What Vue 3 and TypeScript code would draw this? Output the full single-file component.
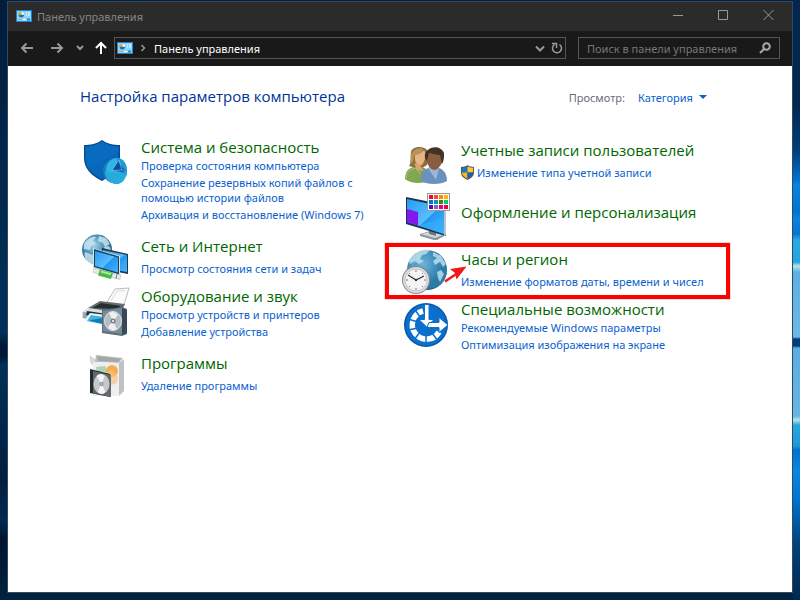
<script setup lang="ts">
import { ref } from 'vue'

interface Category {
  id: string
  title: string
  links: string[]
  shield?: boolean
  marked?: boolean
}

const columns: Category[][] = [
  [
    {
      id: 'security',
      title: 'Система и безопасность',
      links: [
        'Проверка состояния компьютера',
        'Сохранение резервных копий файлов с помощью истории файлов',
        'Архивация и восстановление (Windows 7)',
      ],
    },
    { id: 'network', title: 'Сеть и Интернет', links: ['Просмотр состояния сети и задач'] },
    { id: 'hardware', title: 'Оборудование и звук', links: ['Просмотр устройств и принтеров', 'Добавление устройства'] },
    { id: 'programs', title: 'Программы', links: ['Удаление программы'] },
  ],
  [
    { id: 'users', title: 'Учетные записи пользователей', links: ['Изменение типа учетной записи'], shield: true },
    { id: 'display', title: 'Оформление и персонализация', links: [] },
    { id: 'clock', title: 'Часы и регион', links: ['Изменение форматов даты, времени и чисел'], marked: true },
    {
      id: 'access',
      title: 'Специальные возможности',
      links: ['Рекомендуемые Windows параметры', 'Оптимизация изображения на экране'],
    },
  ],
]

const swatches: string[] = [
  '#e81123', '#ff4343', '#ff8c00', '#ffb900',
  '#0078d7', '#0099bc', '#498205', '#00cc6a',
  '#4f10b5', '#8764b8', '#e3008c', '#e8004c',
]

const search = ref('')
const view = ref('category')

function density(c: Category): string {
  if (c.links.length === 0) return 'bare'
  return c.links.length === 1 ? 'single' : 'multi'
}
</script>

<template>
  <div class="desktop">
    <main class="window">
      <header class="titlebar">
        <svg class="app-icon" viewBox="0 0 16 12" aria-hidden="true">
          <rect width="16" height="12" fill="#1687cf" /><rect x="1" y="1" width="14" height="10" fill="#8fd3fb" />
          <circle cx="5.3" cy="4.8" r="2.8" fill="#fff" /><path d="M5.3 4.8V2a2.8 2.8 0 1 0 2.8 2.8z" fill="#0879c4" />
          <path d="M5.3 4.8V1.6a3 3 0 0 0-3 3.2z" fill="#f5a623" /><path d="M10 3h1M12 3h2M10 5h1M12 5h2" stroke="#fff" />
          <path d="M2 9.5h4" stroke="#ff9a1f" /><path d="M7 9.5h3" stroke="#fff" /><path d="M11 8.5h3v2h-3z" fill="#1687cf" />
        </svg>
        <span class="caption">Панель управления</span>
        <button class="win-btn" type="button" aria-label="Свернуть"><svg viewBox="0 0 12 12"><path d="M1 5.5h10" /></svg></button>
        <button class="win-btn" type="button" aria-label="Развернуть"><svg viewBox="0 0 12 12"><path d="M1.500 .5h9v9h-9z" /></svg></button>
        <button class="win-btn" type="button" aria-label="Закрыть"><svg viewBox="0 0 12 12"><path d="M1.500 0l10 10M11.500 0l-10 10" /></svg></button>
      </header>

      <nav class="toolbar">
        <button class="nav-btn" type="button" aria-label="Назад"><svg viewBox="0 0 14 14"><path d="M13 7H2M6.500 2.500L2 7l4.500 4.500" /></svg></button>
        <button class="nav-btn" type="button" aria-label="Вперед"><svg viewBox="0 0 14 14"><path d="M1 7h11M7.500 2.500L12 7l-4.500 4.500" /></svg></button>
        <button class="nav-btn small" type="button" aria-label="Последние"><svg viewBox="0 0 8 14"><path d="M1 5L4 8l3-3" /></svg></button>
        <button class="nav-btn up" type="button" aria-label="Вверх"><svg viewBox="0 0 14 14"><path d="M7 13V2M2 7l5-5 5 5" /></svg></button>
        <div class="address">
          <svg class="app-icon" viewBox="0 0 16 12" aria-hidden="true">
            <rect width="16" height="12" fill="#1687cf" /><rect x="1" y="1" width="14" height="10" fill="#8fd3fb" />
            <circle cx="5.3" cy="4.800" r="2.8" fill="#fff" /><path d="M5.3 4.8V2a2.8 2.8 0 1 0 2.8 2.8z" fill="#0879c4" />
            <path d="M5.3 4.8V1.6a3 3 0 0 0-3 3.2z" fill="#f5a623" /><path d="M10 3h1M12 3h2M10 5h1M12 5h2" stroke="#fff" />
            <path d="M2 9.5h4" stroke="#ff9a1f" /><path d="M7 9.5h3" stroke="#fff" /><path d="M11 8.5h3v2h-3z" fill="#1687cf" />
          </svg>
          <svg class="crumb-arrow" viewBox="0 0 6 8" aria-hidden="true"><path d="M1.500 1L4.500 4l-3 3" /></svg>
          <button class="crumb" type="button">Панель управления</button>
          <button class="addr-btn" type="button" aria-label="Предыдущие расположения"><svg viewBox="0 0 12 12"><path d="M2 4.500l4 4 4-4" /></svg></button>
          <button class="addr-btn" type="button" aria-label="Обновить"><svg class="thin" viewBox="0 0 12 12"><path d="M8.500 2.500A4.500 4.500 0 1 1 3.500 2.500M1 1.500h4.500V6" /></svg></button>
        </div>
        <label class="search">
          <input v-model="search" type="text" placeholder="Поиск в панели управления" aria-label="Поиск в панели управления" />
          <svg viewBox="0 0 12 12" aria-hidden="true"><circle cx="7.500" cy="4.500" r="3.300" /><path d="M5 7L1 11" /></svg>
        </label>
      </nav>

      <section class="content">
        <div class="heading">
          <h1>Настройка параметров компьютера</h1>
          <div class="view">
            <label for="view-mode">Просмотр:</label>
            <select id="view-mode" v-model="view"><option value="category">Категория</option></select>
            <svg viewBox="0 0 8 4" aria-hidden="true"><path d="M0 0h8L4 4z" /></svg>
          </div>
        </div>

        <div class="grid">
          <div v-for="(column, n) in columns" :key="n" class="column">
            <article v-for="c in column" :key="c.id" class="item" :class="density(c)">
              <svg v-if="c.id === 'security'" class="icon" viewBox="0 0 48 50" aria-hidden="true">
                <path d="M20 2C15 6 8 7 2 7v13c0 11 8 18 18 23 10-6 18-12 18-23V7C32 7 25 6 20 2z" fill="#064b94" />
                <path d="M20 3.500C15 7 9 8.500 3.500 8.500V20c0 10 7 16 16.500 21.500C30 36 36.500 30 36.500 20V8.500C31 8.500 25 7 20 3.500z" fill="#0966b8" />
                <path d="M3.500 8.500C9 8.500 15 7 20 3.500 25 7 31 8.500 36.500 8.500V14L7 31C4.500 27 3.500 24 3.500 20z" fill="#0a70c6" opacity=".5" />
                <ellipse cx="32" cy="33" rx="11" ry="12" fill="#1580bb" /><ellipse cx="34.500" cy="33" rx="10.500" ry="13" fill="#2fb4e6" />
                <path d="M34.500 20c7 0 10.500 6 10.500 13 0 2 0 4-1 5L36 32z" fill="#1f9ad2" />
                <path d="M36 23l-6 9.500 14 2z" fill="#074f9f" /><path d="M37 22l3 10-10 .5M40 32l4.500 3M36 23l-6 9.500" fill="none" stroke="#7cccf0" stroke-width=".7" />
                <path d="M23 33l13 2 8 1c-3 10-8 10-10 10-5 0-11-5-11-13z" fill="#27abdf" />
              </svg>
              <svg v-else-if="c.id === 'network'" class="icon" viewBox="0 0 48 50" aria-hidden="true">
                <defs><linearGradient id="scr" x1="0" y1="0" x2="1" y2="1"><stop stop-color="#239df2" /><stop offset=".55" stop-color="#5bbcff" /><stop offset=".56" stop-color="#2098ef" /><stop offset="1" stop-color="#4bb2fb" /></linearGradient>
                  <radialGradient id="globe" cx=".4" cy=".35"><stop stop-color="#a8d5ea" /><stop offset=".7" stop-color="#438fb6" /><stop offset="1" stop-color="#2b6d95" /></radialGradient></defs>
                <circle cx="15" cy="12.500" r="15" fill="url(#globe)" />
                <path d="M2 7c3-5 8-8 12-7l-3 4 3 2-5 3-1 4-6-1zM3 15l8 3 2 4-3 5C5 25 1 20 3 15zM17-1l7 2 4 6-5 3-2-4-5-2zM22 10l5-1 2 4-5 2z" fill="#d3e8f0" opacity=".8" />
                <path d="M20 11l26 6v20l-26-5z" fill="#203747" /><path d="M21 13l24 5v17l-24-4z" fill="url(#scr)" />
                <path d="M11 11l27 8v20L11 31z" fill="#dce3e7" /><path d="M12 12l25 7.500v18L12 30z" fill="#1c4057" /><path d="M13 14l23 6.500v15L13 29z" fill="url(#scr)" />
                <path d="M12 31l27 7-1 4.500-27-7z" fill="#e4e8ea" stroke="#aab1b5" stroke-width=".5" /><path d="M18 32.500l13 3.500-2 6-13-3.500z" fill="#46b94a" /><path d="M19 34.500l10 2.800" stroke="#a9ec8e" stroke-width="2" /><path d="M35 37l-1 5" stroke="#7d8589" />
              </svg>
              <svg v-else-if="c.id === 'hardware'" class="icon" viewBox="0 0 48 50" aria-hidden="true">
                <path d="M25 15L33 2l14-1-6 20z" fill="#fbfbfb" stroke="#aaa" stroke-width=".8" /><path d="M29 14l6-10 8-.5" fill="none" stroke="#ddd" />
                <path d="M6 21l12-7 25 3-5 9-24 1z" fill="#656c70" /><path d="M10 21l9-5 20 3-4 3z" fill="#272c2f" />
                <path d="M6 21l21 3 1 12L0 31v-6z" fill="#d9dfe2" /><path d="M1 25l24 4v8L1 31z" fill="#9ca6ab" /><path d="M5 24l20 3-1 5L4 28z" fill="#24313a" />
                <path d="M8 26l16 2-2 11-20-5z" fill="#edf8fc" /><path d="M9 28l13 2-1 7-16-3z" fill="#43b4df" /><path d="M9 33l12-2v6l-13-3z" fill="#167bb4" />
                <path d="M20 23l20-3 5 2v25l-5 2-20-3z" fill="#5b6c7b" /><path d="M21 24l19-3v26l-19-3z" fill="#7a8b98" /><path d="M40 21l5 2v23l-5 2z" fill="#394857" />
                <ellipse cx="31" cy="34" rx="8.500" ry="9.500" fill="#b6bdc2" stroke="#e1e4e6" /><path d="M31 34l-4-8q5-3 9 2zM31 34l4 8q-6 3-9-2z" fill="#eef0f1" /><circle cx="31" cy="34" r="2.500" fill="#73808a" /><circle cx="31" cy="34" r="1" fill="#fff" />
              </svg>
              <svg v-else-if="c.id === 'programs'" class="icon" viewBox="0 0 48 50" aria-hidden="true">
                <path d="M8 2l8 6-5 3-2-2z" fill="#d9d9d9" stroke="#bbb" stroke-width=".5" /><path d="M14 1l27 3-4 5-24-1z" fill="#bdbdbd" /><path d="M15 2l24 3-3 3-20-1z" fill="#a4a6a7" /><path d="M11 8l26 1v33l-26 0z" fill="#efefef" /><path d="M37 9l5-4v32l-5 5z" fill="#bfc2c3" />
                <path d="M14 13l9-1 4 8-11 5z" fill="#acd2b7" /><circle cx="30" cy="17" r="6" fill="#f4ad50" /><path d="M22 19l8-3 6 7-1 6-8 3z" fill="#f6c27f" opacity=".7" />
                <path d="M8 15l20 5v23L8 39z" fill="#242a2e" /><path d="M11 17l18 4v22l-18-4z" fill="#626a70" />
                <ellipse cx="19.500" cy="30" rx="8" ry="10" fill="#c4c9cc" /><path d="M19.500 30l-5-8q4-4 8 0zM19.500 30l4 8q-3 4-8 0z" fill="#f5f5f5" /><circle cx="19.500" cy="30" r="2" fill="#7e888f" /><circle cx="19.500" cy="30" r=".8" fill="#fff" />
              </svg>
              <svg v-else-if="c.id === 'users'" class="icon" viewBox="0 0 48 50" aria-hidden="true">
                <path d="M3 38c0-9 5-12 13-13 7 1 12 4 12 14-6 4-19 4-25-1z" fill="#83a652" /><path d="M4 37c1-7 5-9 10-10l4 6" fill="none" stroke="#a9c47b" />
                <path d="M9 11c1-5 11-7 16-2 3 4 2 11 0 15-5 4-11 3-18 1 3-4 1-10 2-14z" fill="#8e6d3b" /><path d="M13 13c5 1 8-3 9-4 3 4 1 11-2 15-5 2-8-3-7-11z" fill="#e5b583" /><path d="M12 22l6 2 3 6-6-1z" fill="#d9a673" /><path d="M9 14c2-5 7-8 12-6-1 4-5 6-9 6l-1 7-3 2z" fill="#b7955a" />
                <path d="M19 40c-1-9 4-13 12-14 9 0 14 5 14 14-6 4-20 4-26 0z" fill="#6b91bd" /><path d="M26 27l8 12 3-12-6-3z" fill="#9bb8d8" />
                <path d="M24 15c-1-8 13-11 17-3 2 6-3 16-8 17-6 0-9-8-9-14z" fill="#8a5d40" /><path d="M23 17c-2-11 15-15 19-5 0 4 0 8-2 11l-2-9c-4 0-9-2-11-2l-2 8z" fill="#443227" />
              </svg>
              <svg v-else-if="c.id === 'display'" class="icon" viewBox="0 0 48 50" aria-hidden="true">
                <path d="M18 43l10-3 16 4-9 5h-3l-14-4z" fill="#8c969d" /><path d="M19 43l9-2 13 3-8 3z" fill="#d2d8db" /><path d="M27 37h7v8l-7-2z" fill="#6d777d" />
                <path d="M4 6l40 8v31L4 33z" fill="#17364d" /><path d="M5 8l37 8v27L5 31z" fill="url(#scr)" /><path d="M5 18l11 3v13.500L5 31z" fill="#8416f0" /><path d="M16 34.500L42 27v16z" fill="#35adff" opacity=".6" />
                <path d="M42 14l2 1v29l-2 1z" fill="#b6c4cd" />
                <rect x="25.500" y="2.500" width="22" height="17" fill="#fff" stroke="#999" />
                <rect v-for="(color, i) in swatches" :key="i" :x="27 + (i % 4) * 5" :y="4 + Math.floor(i / 4) * 5" width="4" height="4" :fill="color" />
              </svg>
              <svg v-else-if="c.id === 'clock'" class="icon" viewBox="0 0 48 50" aria-hidden="true">
                <circle cx="25" cy="20" r="20" fill="url(#globe)" /><circle cx="28" cy="21" r="17" fill="#318abd" opacity=".45" />
                <path d="M9 8c5-7 12-9 19-8l-4 4-4 1-2 4 4 2-5 3-4-3-5 3-1-3zM31 2l8 4 5 8-3 3-3-5-5 3-2-4 4-3-4-2zM35 22l4-2 3 4-4 8-2-4z" fill="#b9deeb" opacity=".85" />
                <circle cx="14" cy="30" r="14" fill="#858b8f" /><circle cx="14" cy="30" r="13" fill="#d9dcde" /><circle cx="14" cy="30" r="11" fill="#f4f4f4" stroke="#b5b9bb" stroke-width=".7" />
                <g stroke="#777" stroke-width="1"><path d="M14 20v2M14 38v2M4 30h2M22 30h2M7 23l1 1M20 36l1 1M21 23l-1 1M8 36l-1 1" /></g><path d="M6 25l8 5 8-4" fill="none" stroke="#333" stroke-width="1.300" /><circle cx="14" cy="30" r="1.200" fill="#333" />
              </svg>
              <svg v-else class="icon" viewBox="0 0 48 50" aria-hidden="true">
                <circle cx="24" cy="25" r="22" fill="#0759a8" /><circle cx="24" cy="25" r="20.500" fill="#0b70cc" />
                <path d="M21 11A14.300 14.300 0 1 0 37 32" fill="none" stroke="#fff" stroke-width="5.500" />
                <path d="M13 10l6 8M6 19l10 3M6 30l10-2M12 40l6-8M24 45v-9M36 41l-6-8" stroke="#0b70cc" stroke-width="1.500" />
                <path d="M22.500 4.500h4.500v15h5L24.700 27l-7.700-7.500h5.500z" fill="#fff" stroke="#0b70cc" stroke-width="1" /><path d="M27 22.500h10v-5l9 7.500-9 7.500v-5H25z" fill="#fff" stroke="#0b70cc" stroke-width="1" />
              </svg>

              <div class="text">
                <h2><a href="#">{{ c.title }}</a></h2>
                <ul v-if="c.links.length">
                  <li v-for="link in c.links" :key="link">
                    <svg v-if="c.shield" class="shield" viewBox="0 0 14 16" aria-hidden="true">
                      <path d="M7 0c2 1.500 4 2 7 2v6c0 4-3 6-7 8-4-2-7-4-7-8V2c3 0 5-.5 7-2z" fill="#555" /><path d="M7 1.500V8H1V3c2 0 4-.5 6-1.500z" fill="#1677d2" /><path d="M7 1.500V8h6V3c-2 0-4-.5-6-1.500z" fill="#fdc52f" /><path d="M1 8h6v6.800C3.500 13 1 11 1 8z" fill="#fdb913" /><path d="M13 8H7v6.800C10.500 13 13 11 13 8z" fill="#1166b8" />
                    </svg>
                    <a href="#">{{ link }}</a>
                  </li>
                </ul>
              </div>

              <div v-if="c.marked" class="marker">
                <svg class="pointer" viewBox="0 0 24 18" aria-hidden="true"><path d="M1 16.500L13 8.500" stroke="#f01818" stroke-width="2.500" /><path d="M22.500 1.500L6 4l5 4 1.500 6.500z" fill="#f01818" /></svg>
              </div>
            </article>
          </div>
        </div>
      </section>
    </main>
  </div>
</template>

<style>
body {
  margin: 0;
}
</style>

<style scoped>
* {
  box-sizing: border-box;
}
.desktop {
  display: flex;
  min-height: 100vh;
  padding: 1px 7px 7px;
  background:
    linear-gradient(#02264d 0, #02264d 100px, #003d78 150px, #0072cf 180px, #0a84e0 185px, #0072cf 212px, #0883e0 218px, #0876cf 234px, #27a9e2 240px, #22a4df 262px, #b6e3e5 266px, #5cb1e2 272px, #6bb8e8 337px, #004078 339px, #004078 346px, #5aafe0 348px, #66b5e5 416px, #b6e3e5 420px, #27a9df 425px, #1c98db 446px, #0072cc 450px, #0a86e5 472px, #0072cf 500px, #00417a 545px, #012850 600px) right top / 7px 100% no-repeat,
    linear-gradient(#011c3c 0, #01264b 150px, #003058 300px, #003058 332px, #001838 345px, #001838 356px, #003058 365px, #001f3f 480px, #002a52 520px, #001530 540px, #00233f 600px);
  font-family: "Noto Sans", "Open Sans", sans-serif;
  font-size: 11px;
}
.window {
  display: flex;
  flex: 1;
  flex-direction: column;
  min-width: 0;
  border: 1px solid #34495e;
  background: #fff;
}
button,
input,
select {
  padding: 0;
  border: 0;
  background: none;
  color: inherit;
  font: inherit;
}
svg {
  flex: none;
}
.app-icon {
  width: 16px;
  height: 12px;
}
.titlebar {
  display: flex;
  align-items: center;
  height: 29px;
  padding: 0 2px 1px 8px;
  background: #2b2b2b;
  color: #858585;
}
.caption {
  flex: 1;
  margin-left: 5px;
}
.win-btn {
  width: 45px;
  height: 28px;
}
.win-btn svg {
  display: block;
  width: 12px;
  height: 12px;
  margin: 0 auto;
  fill: none;
  stroke: #999;
}
.toolbar {
  display: flex;
  align-items: center;
  height: 35px;
  padding: 0 12px 1px;
  background: #191919;
}
.nav-btn {
  width: 14px;
  height: 22px;
  margin-right: 16px;
  color: #999;
}
.nav-btn svg {
  display: block;
  width: 100%;
  height: 14px;
  fill: none;
  stroke: currentColor;
  stroke-width: 2;
}
.nav-btn.small {
  width: 8px;
  margin-right: 10px;
  margin-left: -4px;
}
.nav-btn.up {
  margin-right: 6px;
  color: #fff;
}
.address,
.search {
  display: flex;
  align-items: center;
  height: 22px;
  border: 1px solid #555;
}
.address {
  flex: 1;
  padding-left: 2px;
  color: #fff;
}
.crumb-arrow {
  width: 6px;
  height: 8px;
  margin: 0 8px 0 7px;
  fill: none;
  stroke: #999;
  stroke-width: 1.5;
}
.crumb {
  flex: 1;
  text-align: left;
}
.addr-btn {
  width: 17px;
  height: 20px;
}
.addr-btn svg {
  display: block;
  width: 12px;
  height: 12px;
  margin: 0 auto;
  fill: none;
  stroke: #999;
  stroke-width: 2;
}
.addr-btn .thin {
  stroke-width: 1.5;
}
.search {
  flex: 0 1 202px;
  margin-left: 12px;
  padding: 0 8px;
}
.search input {
  flex: 1;
  width: 0;
  outline: 0;
  color: #ddd;
}
.search input::placeholder {
  color: #777;
  opacity: 1;
}
.search svg {
  width: 12px;
  height: 12px;
  fill: none;
  stroke: #aaa;
  stroke-width: 2;
}
.content {
  flex: 1;
  padding: 19px 70px 20px 74px;
}
.heading {
  display: flex;
  align-items: center;
  justify-content: space-between;
  height: 22px;
  margin: 0 15px 30px -2px;
}
h1,
h2 {
  margin: 0;
  font-family: "Open Sans", "Noto Sans", sans-serif;
  font-size: 15px;
  font-weight: 400;
  line-height: 20px;
}
h1 {
  color: #003399;
}
h2 a {
  color: #006600;
}
a {
  color: #0a5fcf;
  text-decoration: none;
}
.view {
  display: flex;
  align-items: center;
  padding-top: 2px;
  color: #6b6b7b;
}
.view select {
  margin: 0 6px 0 13px;
  appearance: none;
  color: #0a5fcf;
}
.view svg {
  width: 8px;
  height: 4px;
  fill: #0a5fcf;
}
.grid {
  display: grid;
  grid-template-columns: 1fr 1fr;
}
.column + .column {
  padding-top: 3px;
}
.item {
  position: relative;
  display: flex;
  gap: 11px;
}
.icon {
  width: 48px;
  height: 50px;
  margin-top: 1px;
  overflow: visible;
}
.text {
  flex: 1;
  min-width: 0;
}
ul {
  margin: 0;
  padding: 0;
  list-style: none;
}
li {
  display: flex;
  align-items: center;
  gap: 3px;
  line-height: 15px;
}
.multi li a {
  max-width: 240px;
}
.single {
  height: 50px;
}
.single ul {
  padding-top: 5px;
}
.multi {
  padding-bottom: 13px;
}
.multi .icon {
  margin-bottom: -13px;
}
.multi li {
  padding-top: 1px;
  padding-bottom: 1px;
}
.bare {
  height: 59px;
}
.bare .text {
  padding-top: 12px;
}
.shield {
  width: 13px;
  height: 15px;
}
.marker {
  position: absolute;
  top: -6px;
  right: -8px;
  bottom: 0;
  left: -17px;
  border: 4px solid #f00;
  box-shadow: 0 0 1px #555;
  pointer-events: none;
}
.pointer {
  position: absolute;
  top: 18px;
  left: 55px;
  width: 24px;
  height: 18px;
}
</style>
